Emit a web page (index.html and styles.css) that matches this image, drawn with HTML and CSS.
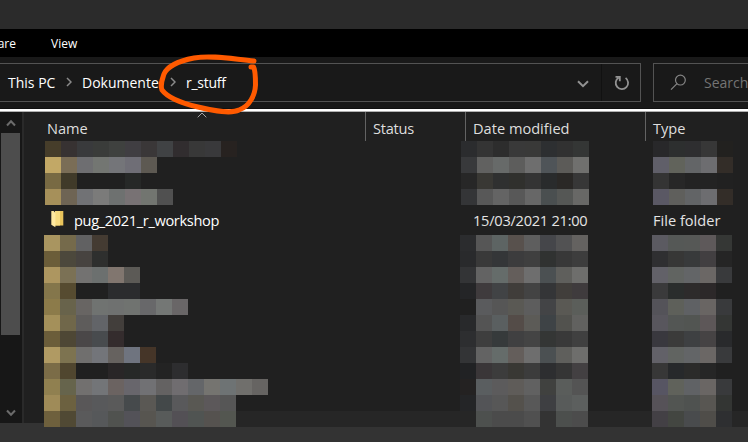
FILE: index.html
```html
<!DOCTYPE html>
<html lang="en">
<head>
<meta charset="utf-8">
<title>r_stuff</title>
<link rel="stylesheet" href="styles.css">
</head>
<body>
<div class="window">
  <div class="titlebar"></div>
  <nav class="ribbon"><span class="tab tab-share">Share</span><span class="tab"><span class="t-view">View</span></span></nav>
  <div class="toolbar">
    <div class="address">
      <span class="crumb c-pc">This PC</span>
      <svg class="sep" width="6" height="10" viewBox="0 0 6 10"><path d="M1 1l4 4-4 4"/></svg>
      <span class="crumb c-dok">Dokumente</span>
      <svg class="sep" width="6" height="10" viewBox="0 0 6 10"><path d="M1 1l4 4-4 4"/></svg>
      <span class="crumb c-stuff">r_stuff</span>
      <svg class="drop" width="12" height="8" viewBox="0 0 12 8"><path d="M1 1.2l5 5 5-5"/></svg>
      <div class="refresh"><svg width="16" height="16" viewBox="0 0 16 16"><path d="M11.6 2.9A6.2 6.2 0 1 1 4.5 2.7M1.5 1.9h4.3v4.3"/></svg></div>
    </div>
    <div class="search">
      <svg width="17" height="17" viewBox="0 0 17 17"><circle cx="10.4" cy="6.1" r="4.9"/><path d="M7 9.6L1 15.6"/></svg>
      <span class="c-search">Search</span>
    </div>
  </div>
  <div class="main">
    <div class="scrollbar">
      <svg width="10" height="8" viewBox="0 0 10 8"><path d="M1 6.5l4-4.3 4 4.3"/></svg>
      <div class="thumb"></div>
      <svg class="down" width="10" height="8" viewBox="0 0 10 8"><path d="M1 1.5l4 4.3 4-4.3"/></svg>
    </div>
    <div class="list">
      <div class="head">
        <span class="col"><span class="h-name">Name</span><svg class="sort" width="10" height="6" viewBox="0 0 10 6"><path d="M.7 5.3L5 1l4.3 4.3"/></svg></span>
        <span class="col"><span class="h-status">Status</span></span>
        <span class="col"><span class="h-date">Date modified</span></span>
        <span class="col"><span class="h-type">Type</span></span>
      </div>
      <div class="mosaic upper" data-set="upper"></div>
      <div class="row">
        <span class="file">
          <svg width="13" height="17" viewBox="0 0 13 17"><path fill="#e9c45c" d="M4 0h8.3v14.5H4z"/><path fill="#f8dc80" d="M4 0h5v14.5H4z"/><path fill="#ffe9a0" d="M.3 0h2.4l1.7 2v14.3L.3 13.7z"/></svg>
          <span class="f-name">pug_2021_r_workshop</span>
        </span>
        <span></span>
        <span class="cell"><span class="f-date">15/03/2021 21:00</span></span>
        <span class="cell"><span class="f-type">File folder</span></span>
      </div>
      <div class="mosaic lower" data-set="lower"></div>
    </div>
  </div>
  <div class="status"></div>
  <svg class="mark" width="104" height="66" viewBox="0 0 104 66"><path d="M98 11C76 9 56 5 38 8C22 11 11 17 8 24C6 30 4 35 6 40C12 48 29 54 42 57C59 61 75 64 83 60C94 56 99 45 99.500 35C99.500 27 99.500 20 97.500 17L95 17"/></svg>
</div>
<script src="mosaic.js"></script>
</body>
</html>
```
FILE: styles.css
```css
* { box-sizing: border-box; }
body { margin: 0; background: #202020; }
.window {
  position: relative;
  width: 748px;
  height: 442px;
  overflow: hidden;
  display: flex;
  flex-direction: column;
  font: 14px/20px "Open Sans", "Noto Sans", sans-serif;
  color: #fff;
  white-space: nowrap;
}
svg { display: block; flex: none; fill: none; }
.titlebar { height: 29px; background: #2b2b2b; }
.ribbon { height: 28px; padding-top: 1px; background: #000; display: flex; align-items: center; gap: 35px; font-size: 12px; }
.tab-share { width: 16px; display: flex; justify-content: flex-end; }
.toolbar { height: 54px; padding-top: 6px; background: #191919; border-bottom: 2px solid #fff; display: flex; gap: 12px; box-shadow: inset 0 -1px #111; }
.address { width: 641px; flex: none; height: 39px; border: 1px solid #535353; border-left: 0; display: flex; align-items: center; padding-left: 8px; }
.sep { margin: -2px 10px 0 10px; stroke: #8a8a8a; stroke-width: 1.5; }
.c-pc { width: 48px; }
.c-dok { width: 78px; }
.c-stuff { letter-spacing: -.25px; }
.drop { margin: 2px 0 0 auto; stroke: #929292; stroke-width: 2; }
.refresh { width: 39px; height: 37px; margin-left: 12px; border-left: 1px solid #111; display: flex; align-items: center; justify-content: center; padding-left: 2px; }
.refresh svg { stroke: #929292; stroke-width: 1.8; }
.search { width: 110px; height: 39px; flex: none; border: 1px solid #535353; display: flex; align-items: center; padding-left: 16px; gap: 17px; color: #747474; }
.search svg { stroke: #858585; stroke-width: 1.2; }
.main { height: 312px; border-top: 1px solid #b0b0b0; display: flex; }
.scrollbar { width: 24px; flex: none; background: #171717; border-right: 2px solid #2a2a2a; padding: 7px 0 0 1px; display: flex; flex-direction: column; }
.scrollbar svg { margin-left: 5px; stroke: #6b6b6b; stroke-width: 2; }
.thumb { width: 19px; height: 202px; margin-top: 6px; background: #4d4d4d; }
.scrollbar .down { margin-top: 74px; }
.list { flex: 1; min-width: 0; background: #202020; }
.head, .row { display: grid; grid-template-columns: 342px 100px 180px 102px; }
.head { height: 29px; color: #dedede; font-size: 14.6px; }
.col { position: relative; padding: 6px 0 0 7px; border-right: 1px solid #636363; }
.col:first-child { padding-left: 23px; }
.col:last-child { border: 0; }
.h-status { letter-spacing: -.25px; }
.sort { position: absolute; left: 173px; top: 0; stroke: #a5a5a5; stroke-width: 1; }
.row { height: 30px; padding-bottom: 1px; align-items: center; color: #e4e4e4; font-size: 14.6px; }
.file { display: flex; align-items: center; gap: 10px; padding-left: 27px; color: #fff; }
.f-name { letter-spacing: -.35px; }
.f-date { letter-spacing: -.25px; }
.cell { padding-left: 7px; }
.mosaic { position: relative; display: flex; flex-direction: column; }
.upper { margin-left: 21px; }
.lower { margin-left: 20px; }
.strip { height: 16px; display: grid; grid-template-columns: repeat(44, 16px); }
.strip i { display: block; }
.lower .strip:last-child { background: #262626; }
.status { height: 19px; background: #333; }
.mark { position: absolute; left: 156px; top: 50px; stroke: #ff5a00; stroke-width: 5; stroke-linecap: round; stroke-linejoin: round; }
```
FILE: mosaic.js
```js
// Each row lists the tile colours of the name, date and type columns; "-" is an empty tile.
const sets = {
  upper: [
    ["463d2a 373232 393a3c 3a3c3a 3f413f 403e42 3a3738 404244 312d2f 383838 39393b 272220", "2b2c2e 343434 2d2d2d 393939 393938 2d2f31 313131 343635", "28282a 2d2f2f 2e2e30 373737 22211f"],
    ["c2a866 7a6d56 6e6e71 737672 747579 6f6e76 5d5952", "38393b 616160 676a69 5d5d5c 6e6e6e 4f5458 5c5b58 70706e", "605f69 61635b 636567 6d6d70 332d28"],
    ["786a43 403a29 - - - 262827", "272727 393834 2f3030 30302d 343434 292b2c 2a2826 373737", "343434 272727 232323 232323 212121"],
    ["a6905a 6e6454 717275 7b7b7a 6e7170 787274 727570 505050", "343537 585858 646464 585858 676767 4a4f50 555755 686866", "5a5864 5f5f5c 626466 6d6d70 332d28"]
  ],
  lower: [
    ["a99560 756a4b 616162 443b32", "2b2c2e 565656 5d6463 58514d 5e5e5e 45464a 525253 646260", "5b5a61 555856 565856 5e595a 353735"],
    ["6b5d39 4c483c 474340 2e2f2e", "292a2c 393939 343638 3c3c3d 3f3f3f 303231 383838 3d3d3d", "2f2f31 373736 383a3b 423f41 252525"],
    ["ad9660 7b7155 737271 6c706f 81766f 5c5a56", "333436 636363 656c6a 645e5b 6e6e6e 4b5052 5f5f5c 6e6e6c", "626168 616461 636567 6b6765 393a3c"],
    ["84764b 564b30 - - 2b2c2e 2b2c2e", "242527 3f3b3d 414345 403d3a 434343 343537 413e3b 3f3b3d", "3a3a3b 2a2d2c 2d2b2b 2c2829 202020"],
    ["8c7b4a 68634b 686563 707371 6f7170 707370 68686a 747775 696667", "- 5a5b5d 565656 5a5954 5d5d5d 434446 5a5954 5b5e5a", "545359 5e605a 5f6164 696563 393a3c"],
    ["a4905a 70674a 5e5c5b 626468 423e3b", "28292b 545454 5a5f60 544c48 5c5b57 3e4346 52524e 61615f", "58565d 535654 525552 5d5758 343634"],
    ["6b5d3a 4e4735 4a4748 484b4e 342c2d", "2d2e30 3e3e3e 363a3b 404041 444444 343635 393939 404040", "39383e 3b3b3a 3e4042 464344 292a2c"],
    ["b09a63 7d7350 706f6e 73757a 66625f 6f747f 453528", "333436 636363 656c6a 645e5b 6e6e6e 4b5052 5f5f5c 6e6e6c", "626168 616461 636567 6b6765 393a3c"],
    ["7b6c47 50462f - - 292627 262827 2a2a2a 232323 2d2d2f", "212224 3a3638 3c3c3c 393834 3c3c3c 2d2e30 353535 434042", "373737 27292b 2b2b2a 262626 202020"],
    ["908050 66644c 72706f 737578 6b6361 68666c 717174 646262 706d70 646669 757470 6e7374 706f6c 666462", "242222 5a5e60 5c5b5c 5f5c59 616161 40413f 5a5d5b 545454", "575563 60625b 606265 6a6664 393a3c"],
    ["9f8b58 6c6140 595758 58595b 5a5a5a 464a4c 5a5854 434849 59595b 595853 5c585a 565656", "242527 535457 575757 54514c 585858 3e3f42 585b5a 5c5f5e", "565258 525552 4f5250 585652 333533"],
    ["6e603d 504934 5a5a5b 56585a 50524f 535258 575550 585b5a 535055 505452 55524f 535650", "- 4d504e 4b4b4b 4b4b4b 505050 333333 4c4f4d 4c4c4c", "434045 434641 494b4d 4f4d49 2e2f31"]
  ]
};
const firstTile = [0, 26, 38];
document.querySelectorAll(".mosaic").forEach(box => {
  sets[box.dataset.set].forEach(groups => {
    const strip = document.createElement("div");
    strip.className = "strip";
    groups.forEach((colours, g) => colours.split(" ").forEach((colour, k) => {
      if (colour === "-") return;
      const tile = document.createElement("i");
      tile.style.gridArea = "1 / " + (firstTile[g] + k + 1);
      tile.style.background = "#" + colour;
      strip.append(tile);
    }));
    box.append(strip);
  });
});
```
